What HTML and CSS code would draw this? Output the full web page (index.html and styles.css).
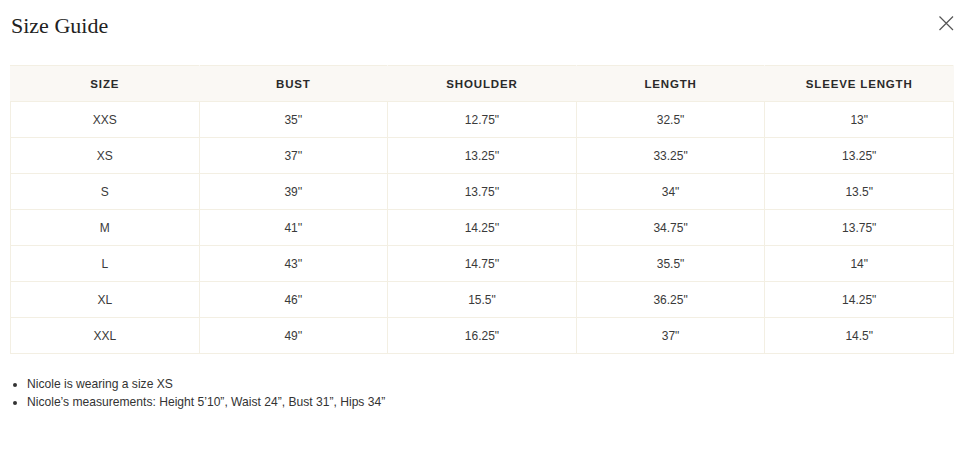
FILE: index.html
```html
<!DOCTYPE html>
<html>
<head>
<meta charset="utf-8">
<link rel="stylesheet" href="styles.css">
</head>
<body>
<div class="modal">
  <div class="head">
    <h1 class="title">Size Guide</h1>
    <button class="close" aria-label="Close">
      <svg width="16" height="16" viewBox="0 0 16 16"><path d="M1.5 1.5L15 15M15 1.5L1.5 15" stroke="#555" stroke-width="1.2" fill="none"/></svg>
    </button>
  </div>
  <table class="sizes">
    <thead>
      <tr><th>SIZE</th><th>BUST</th><th>SHOULDER</th><th>LENGTH</th><th>SLEEVE LENGTH</th></tr>
    </thead>
    <tbody>
      <tr><td>XXS</td><td>35''</td><td>12.75"</td><td>32.5"</td><td>13"</td></tr>
      <tr><td>XS</td><td>37''</td><td>13.25''</td><td>33.25"</td><td>13.25"</td></tr>
      <tr><td>S</td><td>39''</td><td>13.75''</td><td>34"</td><td>13.5"</td></tr>
      <tr><td>M</td><td>41''</td><td>14.25''</td><td>34.75"</td><td>13.75"</td></tr>
      <tr><td>L</td><td>43''</td><td>14.75''</td><td>35.5"</td><td>14"</td></tr>
      <tr><td>XL</td><td>46''</td><td>15.5"</td><td>36.25"</td><td>14.25"</td></tr>
      <tr><td>XXL</td><td>49''</td><td>16.25"</td><td>37"</td><td>14.5"</td></tr>
    </tbody>
  </table>
  <ul class="notes">
    <li>Nicole is wearing a size XS</li>
    <li>Nicole’s measurements: Height 5’10”, Waist 24”, Bust 31”, Hips 34”</li>
  </ul>
</div>
</body>
</html>
```
FILE: styles.css
```css
html, body {
  margin: 0;
  padding: 0;
  background: #fff;
}
.modal {
  padding: 0 2px 0 10px;
  font-family: "Liberation Sans", Arial, sans-serif;
  color: #333;
}
.head {
  display: flex;
  justify-content: space-between;
  align-items: flex-start;
  height: 65px;
}
.title {
  margin: 13px 0 0 1px;
  font-family: "Liberation Serif", "Times New Roman", serif;
  font-weight: normal;
  font-size: 22px;
  line-height: 26px;
  color: #222;
}
.close {
  margin: 15px 0 0 0;
  padding: 0;
  border: 0;
  background: none;
  width: 16px;
  height: 16px;
  cursor: pointer;
}
.close svg {
  display: block;
}
.sizes {
  width: 944px;
  border-collapse: collapse;
  table-layout: fixed;
  border: 1px solid #f3efe3;
}
.sizes th,
.sizes td {
  border: 1px solid #f3efe3;
  text-align: center;
  height: 35px;
  padding: 0;
}
.sizes thead th {
  background: #faf8f4;
  border-left-color: #faf8f4;
  border-right-color: #faf8f4;
  font-weight: bold;
  font-size: 11.5px;
  letter-spacing: 0.85px;
  color: #2a2a2a;
}
.sizes td {
  font-size: 12px;
  color: #3a3a3a;
}
.notes {
  margin: 21px 0 0 0;
  padding-left: 17px;
  font-size: 12.1px;
  line-height: 18px;
  color: #333;
}
```
